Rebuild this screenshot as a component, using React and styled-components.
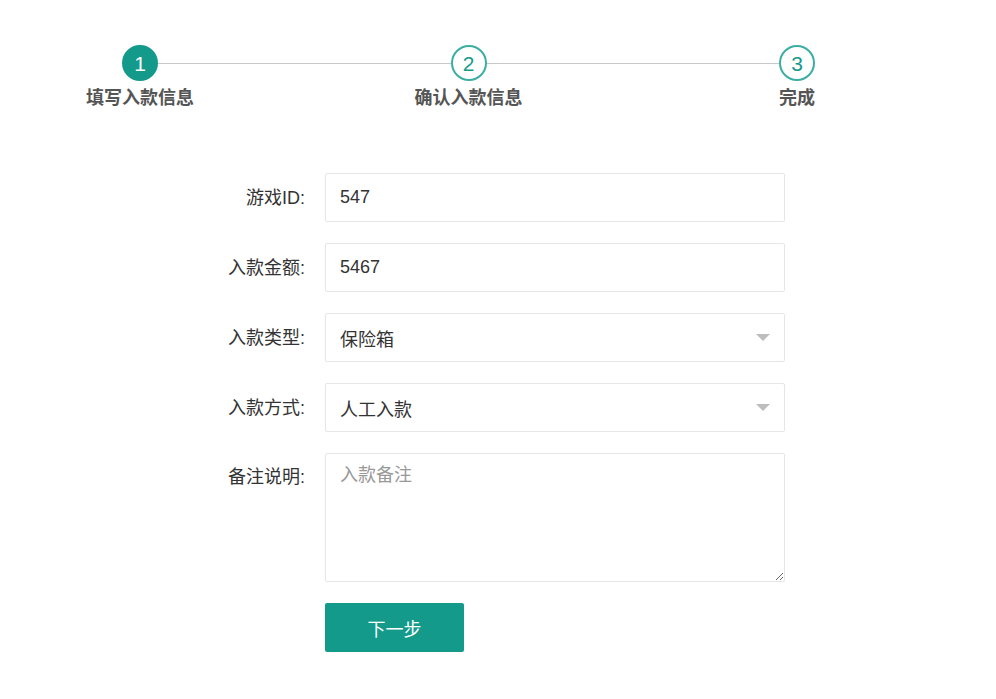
import React from "react";
import styled, { createGlobalStyle } from "styled-components";

const Global = createGlobalStyle`
  html, body { margin: 0; padding: 0; background: #fff; }
  body { font-family: "Liberation Sans", "Noto Sans CJK SC", sans-serif; color: #333; }
  * { box-sizing: border-box; }
`;

const TEAL = "#149a8b";

const Page = styled.div`
  width: 996px;
  min-height: 699px;
  padding-top: 45px;
`;

const Steps = styled.div`
  display: flex;
  flex-direction: column;
`;

const Track = styled.div`
  display: flex;
  align-items: center;
  margin-left: 122px;
  width: 693px;
`;

const Circle = styled.div`
  width: 36px;
  height: 36px;
  flex: none;
  border-radius: 50%;
  display: flex;
  align-items: center;
  justify-content: center;
  font-size: 21px;
  line-height: 1;
  background: ${(p) => (p.$active ? TEAL : "#fff")};
  color: ${(p) => (p.$active ? "#fff" : TEAL)};
  border: 2px solid ${(p) => (p.$active ? TEAL : "#3aaea3")};
`;

const Line = styled.div`
  flex: 1;
  height: 1px;
  background: #c8c8c8;
`;

const Labels = styled.div`
  display: flex;
  justify-content: space-between;
  margin-left: 85px;
  width: 767px;
  margin-top: 5px;
`;

const StepLabel = styled.div`
  width: 110px;
  text-align: center;
  font-size: 18px;
  line-height: 24px;
  font-weight: 700;
  color: #555;
  white-space: nowrap;
`;

const Form = styled.div`
  margin-top: 63px;
  margin-left: 205px;
  display: grid;
  grid-template-columns: 100px 460px;
  column-gap: 20px;
  row-gap: 21px;
`;

const Label = styled.div`
  text-align: right;
  font-size: 18px;
  line-height: 24px;
  color: #333;
  align-self: ${(p) => (p.$top ? "start" : "center")};
  padding-top: ${(p) => (p.$top ? "12px" : "0")};
  white-space: nowrap;
`;

const Field = styled.input`
  height: 49px;
  width: 460px;
  border: 1px solid #e6e6e6;
  border-radius: 2px;
  padding: 0 14px;
  font-family: inherit;
  font-size: 18px;
  color: #333;
  outline: none;
  background: #fff;
`;

const SelectBox = styled.div`
  height: 49px;
  width: 460px;
  border: 1px solid #e6e6e6;
  border-radius: 2px;
  padding: 0 14px;
  display: flex;
  align-items: center;
  justify-content: space-between;
  font-size: 18px;
  color: #333;
`;

const Caret = styled.span`
  width: 0;
  height: 0;
  border-left: 7px solid transparent;
  border-right: 7px solid transparent;
  border-top: 7px solid #bdbdbd;
`;

const Area = styled.textarea`
  height: 129px;
  width: 460px;
  border: 1px solid #e6e6e6;
  border-radius: 2px;
  padding: 9px 14px;
  font-family: inherit;
  font-size: 18px;
  line-height: 24px;
  color: #333;
  outline: none;
  resize: vertical;
  display: block;
  &::placeholder { color: #999; }
`;

const Spacer = styled.div``;

const Button = styled.button`
  width: 139px;
  height: 49px;
  border: none;
  border-radius: 2px;
  background: ${TEAL};
  color: #fff;
  font-family: inherit;
  font-size: 18px;
  cursor: pointer;
`;

export default function App() {
  return (
    <Page>
      <Global />
      <Steps>
        <Track>
          <Circle $active>1</Circle>
          <Line />
          <Circle>2</Circle>
          <Line />
          <Circle>3</Circle>
        </Track>
        <Labels>
          <StepLabel>填写入款信息</StepLabel>
          <StepLabel>确认入款信息</StepLabel>
          <StepLabel>完成</StepLabel>
        </Labels>
      </Steps>
      <Form>
        <Label>游戏ID:</Label>
        <Field defaultValue="547" />
        <Label>入款金额:</Label>
        <Field defaultValue="5467" />
        <Label>入款类型:</Label>
        <SelectBox>
          <span>保险箱</span>
          <Caret />
        </SelectBox>
        <Label>入款方式:</Label>
        <SelectBox>
          <span>人工入款</span>
          <Caret />
        </SelectBox>
        <Label $top>备注说明:</Label>
        <Area placeholder="入款备注" />
        <Spacer />
        <Button>下一步</Button>
      </Form>
    </Page>
  );
}
